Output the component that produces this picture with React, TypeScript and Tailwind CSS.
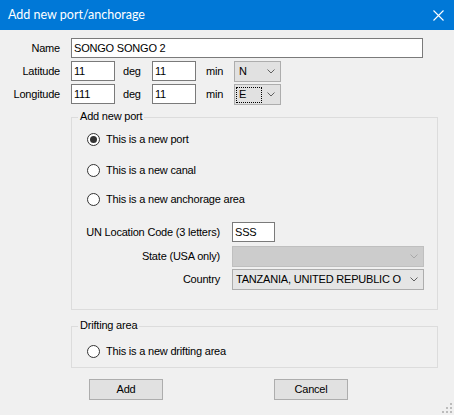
import React from "react";

const Chevron = ({ color = "#606060" }: { color?: string }) => (
  <svg width="8" height="5" viewBox="0 0 8 5" className="shrink-0">
    <path d="M0.5 0.5 L4 4 L7.5 0.5" fill="none" stroke={color} strokeWidth="1" />
  </svg>
);

const Radio = ({ checked, label }: { checked?: boolean; label: string }) => (
  <div className="flex items-center h-[20px]">
    <div className="w-[13px] h-[13px] rounded-full border border-[#333333] bg-white flex items-center justify-center shrink-0">
      {checked && <div className="w-[7px] h-[7px] rounded-full bg-[#333333]" />}
    </div>
    <span className="ml-[6px]">{label}</span>
  </div>
);

export default function App() {
  return (
    <div
      className="w-[454px] h-[415px] bg-[#f0f0f0] flex flex-col relative overflow-hidden text-[11px] leading-[13px] tracking-[-0.2px] text-black"
      style={{ fontFamily: '"Liberation Sans", Arial, sans-serif' }}
    >
      {/* Title bar */}
      <div className="h-[30px] bg-[#0078d7] flex items-center justify-between pl-[8px] pr-[10px] shrink-0">
        <span
          className="text-white text-[12.5px] leading-[16px] tracking-normal"
          style={{ fontFamily: 'Lato, "Noto Sans", sans-serif' }}
        >
          Add new port/anchorage
        </span>
        <svg width="11" height="11" viewBox="0 0 11 11">
          <path d="M0.5 0.5 L10.5 10.5 M10.5 0.5 L0.5 10.5" stroke="#ffffff" strokeWidth="1.1" />
        </svg>
      </div>

      {/* Form rows */}
      <div className="pt-[8px] flex flex-col">
        <div className="h-[23px] flex items-start">
          <div className="w-[60px] h-[20px] flex items-center justify-end">Name</div>
          <div className="ml-[11px] w-[352px] h-[20px] bg-white border border-[#7a7a7a] flex items-center pl-[2px]">
            SONGO SONGO 2
          </div>
        </div>
        <div className="h-[23px] flex items-start">
          <div className="w-[60px] h-[20px] flex items-center justify-end">Latitude</div>
          <div className="ml-[11px] w-[44px] h-[20px] bg-white border border-[#7a7a7a] flex items-center pl-[2px]">11</div>
          <div className="w-[37px] h-[20px] flex items-center pl-[8px]">deg</div>
          <div className="w-[44px] h-[20px] bg-white border border-[#7a7a7a] flex items-center pl-[2px]">11</div>
          <div className="w-[38px] h-[20px] flex items-center pl-[10px]">min</div>
          <div className="w-[47px] h-[21px] bg-[#e1e1e1] border border-[#adadad] flex items-center justify-between pl-[4px] pr-[5px]">
            <span>N</span>
            <Chevron />
          </div>
        </div>
        <div className="h-[23px] flex items-start">
          <div className="w-[60px] h-[20px] flex items-center justify-end">Longitude</div>
          <div className="ml-[11px] w-[44px] h-[20px] bg-white border border-[#7a7a7a] flex items-center pl-[2px]">111</div>
          <div className="w-[37px] h-[20px] flex items-center pl-[8px]">deg</div>
          <div className="w-[44px] h-[20px] bg-white border border-[#7a7a7a] flex items-center pl-[2px]">11</div>
          <div className="w-[38px] h-[20px] flex items-center pl-[10px]">min</div>
          <div className="w-[47px] h-[21px] bg-[#e1e1e1] border border-[#adadad] flex items-center justify-between pl-[1px] pr-[5px]">
            <span className="w-[26px] h-[16px] border border-dotted border-black flex items-center pl-[2px]">E</span>
            <Chevron />
          </div>
        </div>
      </div>

      {/* Add new port group */}
      <div className="mt-[10px] ml-[71px] w-[367px] h-[193px] border border-[#dcdcdc] relative flex flex-col pl-[15px] pt-[11px] shrink-0">
        <span className="absolute left-[6px] top-[-8px] px-[2px] bg-[#f0f0f0] leading-[13px]">Add new port</span>
        <Radio checked label="This is a new port" />
        <div className="mt-[11px]">
          <Radio label="This is a new canal" />
        </div>
        <div className="mt-[9px]">
          <Radio label="This is a new anchorage area" />
        </div>
        <div className="mt-[13px] -ml-[15px] flex items-center h-[20px]">
          <div className="w-[148px] text-right">UN Location Code (3 letters)</div>
          <div className="ml-[12px] w-[43px] h-[20px] bg-white border border-[#7a7a7a] flex items-center pl-[2px]">SSS</div>
        </div>
        <div className="mt-[4px] -ml-[15px] flex items-center h-[21px]">
          <div className="w-[148px] text-right">State (USA only)</div>
          <div className="ml-[12px] w-[192px] h-[21px] bg-[#cccccc] border border-[#bfbfbf] flex items-center justify-end pr-[5px]">
            <Chevron color="#a8a8a8" />
          </div>
        </div>
        <div className="mt-[2px] -ml-[15px] flex items-center h-[21px]">
          <div className="w-[148px] text-right">Country</div>
          <div className="ml-[12px] w-[192px] h-[21px] bg-[#e5e5e5] border border-[#adadad] flex items-center justify-between pl-[3px] pr-[5px]">
            <span>TANZANIA, UNITED REPUBLIC O</span>
            <Chevron />
          </div>
        </div>
      </div>

      {/* Drifting area group */}
      <div className="mt-[16px] ml-[71px] w-[367px] h-[42px] border border-[#dcdcdc] relative flex flex-col pl-[15px] pt-[14px] shrink-0">
        <span className="absolute left-[6px] top-[-8px] px-[2px] bg-[#f0f0f0] leading-[13px]">Drifting area</span>
        <Radio label="This is a new drifting area" />
      </div>

      {/* Buttons */}
      <div className="mt-[11px] flex items-center">
        <div className="ml-[89px] w-[74px] h-[21px] bg-[#e1e1e1] border border-[#adadad] flex items-center justify-center">Add</div>
        <div className="ml-[111px] w-[74px] h-[21px] bg-[#e1e1e1] border border-[#adadad] flex items-center justify-center">Cancel</div>
      </div>

      {/* Resize grip */}
      <svg className="absolute right-[2px] bottom-[2px]" width="10" height="10" viewBox="0 0 10 10">
        <rect x="8" y="0" width="2" height="2" fill="#bcbcbc" />
        <rect x="4" y="4" width="2" height="2" fill="#bcbcbc" />
        <rect x="8" y="4" width="2" height="2" fill="#bcbcbc" />
        <rect x="0" y="8" width="2" height="2" fill="#bcbcbc" />
        <rect x="4" y="8" width="2" height="2" fill="#bcbcbc" />
        <rect x="8" y="8" width="2" height="2" fill="#bcbcbc" />
      </svg>
    </div>
  );
}
